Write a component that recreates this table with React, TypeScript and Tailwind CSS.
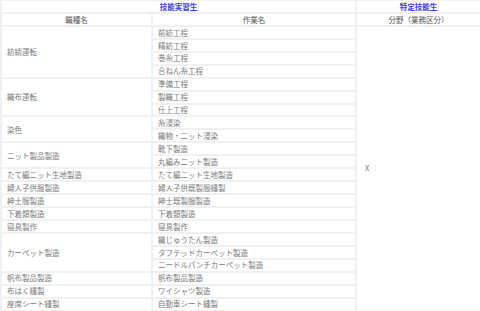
import React from 'react';

type Group = { name: string; tasks: string[] };

const groups: Group[] = [
  { name: '紡績運転', tasks: ['前紡工程', '精紡工程', '巻糸工程', '合ねん糸工程'] },
  { name: '織布運転', tasks: ['準備工程', '製織工程', '仕上工程'] },
  { name: '染色', tasks: ['糸浸染', '織物・ニット浸染'] },
  { name: 'ニット製品製造', tasks: ['靴下製造', '丸編みニット製造'] },
  { name: 'たて編ニット生地製造', tasks: ['たて編ニット生地製造'] },
  { name: '婦人子供服製造', tasks: ['婦人子供既製服縫製'] },
  { name: '紳士服製造', tasks: ['紳士既製服製造'] },
  { name: '下着類製造', tasks: ['下着類製造'] },
  { name: '寝具製作', tasks: ['寝具製作'] },
  { name: 'カーペット製造', tasks: ['織じゅうたん製造', 'タフテッドカーペット製造', 'ニードルパンチカーペット製造'] },
  { name: '帆布製品製造', tasks: ['帆布製品製造'] },
  { name: '布はく縫製', tasks: ['ワイシャツ製造'] },
  { name: '座席シート縫製', tasks: ['自動車シート縫製'] },
];

const totalRows = groups.reduce((n, g) => n + g.tasks.length, 0);

const cell = 'border-2 border-[#f0f0f0] h-[12.95px] p-0 leading-none whitespace-nowrap overflow-hidden';

export default function App() {
  return (
    <div className="w-[480px] h-[311px] overflow-hidden bg-white font-['Noto_Sans_CJK_JP',sans-serif] text-[7.5px] text-[#7a7a7a]">
      <table className="table-fixed border-collapse w-[480px] -mt-[1px]">
        <colgroup>
          <col className="w-[151px]" />
          <col className="w-[204px]" />
          <col className="w-[125px]" />
        </colgroup>
        <thead>
          <tr>
            <th colSpan={2} className={`${cell} text-center font-bold text-[#3b3bd4]`}>技能実習生</th>
            <th className={`${cell} text-center font-bold text-[#3b3bd4]`}>特定技能生</th>
          </tr>
          <tr>
            <th className={`${cell} text-center font-normal text-[#555]`}>職種名</th>
            <th className={`${cell} text-center font-normal text-[#555]`}>作業名</th>
            <th className={`${cell} text-center font-normal text-[#555]`}>分野（業務区分）</th>
          </tr>
        </thead>
        <tbody>
          {groups.map((g, gi) =>
            g.tasks.map((t, ti) => (
              <tr key={g.name + t}>
                {ti === 0 && (
                  <td rowSpan={g.tasks.length} className={`${cell} pl-[5px] text-left`}>
                    {g.name}
                  </td>
                )}
                <td className={`${cell} pl-[5px] text-left`}>{t}</td>
                {gi === 0 && ti === 0 && (
                  <td rowSpan={totalRows} className={`${cell} pl-[8px] text-left align-middle`}>
                    X
                  </td>
                )}
              </tr>
            ))
          )}
        </tbody>
      </table>
    </div>
  );
}
